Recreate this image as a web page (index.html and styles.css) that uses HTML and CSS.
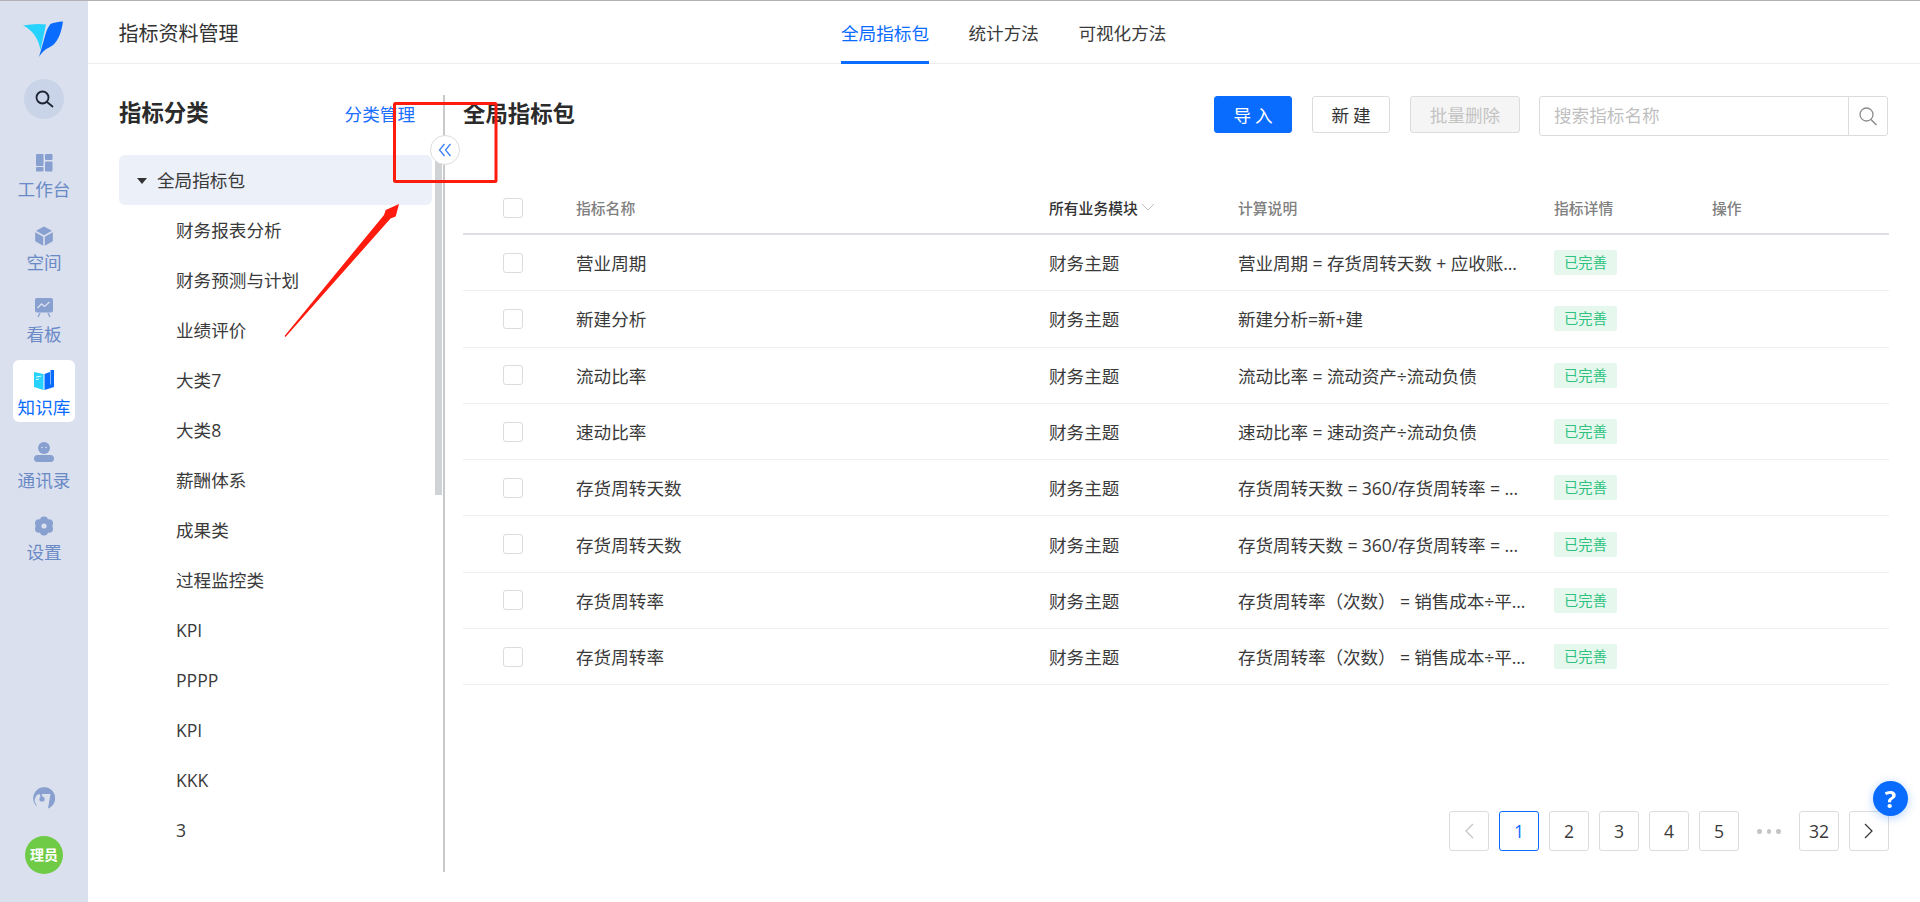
FILE: index.html
```html
<!DOCTYPE html>
<html lang="zh">
<head>
<meta charset="utf-8">
<title>指标资料管理</title>
<link rel="stylesheet" href="styles.css">
</head>
<body>
<div class="page">
  <aside class="rail">
    <svg class="logo" viewBox="0 0 42 38" width="42" height="38">
      <path fill="#26d3ff" d="M1 4.500Q14 2 24 3.500L18.500 29Q15 11 1 4.500Z"/>
      <path fill="#0a6cff" d="M41 0.500Q33 1 28.500 3Q25 7 23 15L17 36Q21 29 28 26Q38 21 41 0.500Z"/>
    </svg>
    <div class="search-dot">
      <svg viewBox="0 0 20 20" width="20" height="20"><circle cx="8.500" cy="8.500" r="6" fill="none" stroke="#1d2433" stroke-width="1.800"/><path d="M13 13l5.500 4.500" stroke="#1d2433" stroke-width="1.800" stroke-linecap="round"/></svg>
    </div>
    <nav class="rail-nav">
      <a class="rail-item">
        <svg class="rail-icon" viewBox="0 0 20 20"><g fill="#87a0cf"><rect x="2" y="1" width="7.500" height="12" rx="1"/><rect x="2" y="14" width="7.500" height="4.500" rx="1"/><rect x="11" y="1" width="7.500" height="6" rx="1"/><rect x="11" y="8.500" width="7.500" height="10" rx="1"/></g></svg>
        <span>工作台</span>
      </a>
      <a class="rail-item">
        <svg class="rail-icon" viewBox="0 0 20 20"><g fill="#87a0cf"><path d="M10 .500l8 4.300-8 4.400-8-4.400z"/><path d="M1.200 6.300l8 4.400v9l-8-4.500z"/><path d="M18.800 6.300l-8 4.400v9l8-4.500z"/></g></svg>
        <span>空间</span>
      </a>
      <a class="rail-item">
        <svg class="rail-icon" viewBox="0 0 20 20"><rect x="1" y="0" width="18" height="14.500" rx="2" fill="#87a0cf"/><path d="M3.500 10l4-4 3 2.500 5-4.500" fill="none" stroke="#dae0ee" stroke-width="1.300"/><path d="M6 15l-2 4M14 15l2 4" stroke="#87a0cf" stroke-width="1.300"/></svg>
        <span>看板</span>
      </a>
      <a class="rail-item is-active">
        <svg class="rail-icon" viewBox="0 0 20 20"><path fill="#26d3ff" d="M0 1l9.500 2v16L0 16z"/><path fill="#0a6cff" d="M10.500 3l6-2.200V-1H20v17l-9.500 3z"/><path d="M2 6l5-.8M2 8.500l3-.5" stroke="#fff" stroke-width=".9"/><path d="M16.500 .5v13" stroke="#8fc0ff" stroke-width=".9"/></svg>
        <span>知识库</span>
      </a>
      <a class="rail-item">
        <svg class="rail-icon" viewBox="0 0 20 20"><circle cx="10" cy="5" r="6" fill="#87a0cf"/><circle cx="8" cy="4.500" r=".8" fill="#dae0ee"/><circle cx="12" cy="4.500" r=".8" fill="#dae0ee"/><rect x="0" y="12" width="20" height="7" rx="3.500" fill="#87a0cf"/></svg>
        <span>通讯录</span>
      </a>
      <a class="rail-item">
        <svg class="rail-icon" viewBox="0 0 20 20"><g fill="#87a0cf"><circle cx="10" cy="4.500" r="4"/><circle cx="10" cy="15.500" r="4"/><circle cx="5" cy="7.300" r="4"/><circle cx="15" cy="7.300" r="4"/><circle cx="5" cy="12.700" r="4"/><circle cx="15" cy="12.700" r="4"/></g><circle cx="10" cy="10" r="2.600" fill="#dae0ee"/></svg>
        <span>设置</span>
      </a>
    </nav>
    <div class="rail-foot">
      <svg class="gauge" viewBox="0 0 22 22" width="22" height="22"><path fill="#87a0cf" d="M4 19.500A11 11 0 1 1 15 21.500L17.500 7H8.500L10 11H8L6.500 7Q2.500 7 1.500 14Z"/><circle cx="9" cy="12" r="2.600" fill="#87a0cf"/></svg>
      <div class="avatar">理员</div>
    </div>
  </aside>

  <div class="main">
    <header class="topbar">
      <div class="topbar-title">指标资料管理</div>
      <div class="tabs">
        <a class="tab is-active">全局指标包</a>
        <a class="tab">统计方法</a>
        <a class="tab">可视化方法</a>
      </div>
    </header>

    <div class="content">
      <section class="side">
        <div class="side-head">
          <h2 class="heading">指标分类</h2>
          <a class="side-link">分类管理</a>
        </div>
        <ul class="tree">
          <li class="tree-root"><i class="caret"></i>全局指标包</li>
          <li>财务报表分析</li>
          <li>财务预测与计划</li>
          <li>业绩评价</li>
          <li>大类7</li>
          <li>大类8</li>
          <li>薪酬体系</li>
          <li>成果类</li>
          <li>过程监控类</li>
          <li>KPI</li>
          <li>PPPP</li>
          <li>KPI</li>
          <li>KKK</li>
          <li>3</li>
        </ul>
        <div class="scroll-thumb"></div>
        <button class="collapse">
          <svg viewBox="0 0 16 16" width="16" height="16"><path d="M7.500 2L2.500 8l5 6M13.500 2l-5 6 5 6" fill="none" stroke="#2f7df6" stroke-width="1.200"/></svg>
        </button>
      </section>

      <section class="panel">
        <div class="toolbar">
          <h2 class="heading">全局指标包</h2>
          <div class="actions">
            <button class="btn btn-primary">导入</button>
            <button class="btn">新建</button>
            <button class="btn btn-disabled">批量删除</button>
            <div class="search">
              <span class="search-ph">搜索指标名称</span>
              <span class="search-btn"><svg viewBox="0 0 20 20" width="20" height="20"><circle cx="8.500" cy="8.500" r="6.500" fill="none" stroke="#8c8c8c" stroke-width="1.300"/><path d="M13 13.500l5.500 5.500" stroke="#8c8c8c" stroke-width="1.500"/></svg></span>
            </div>
          </div>
        </div>

        <div class="table">
          <div class="row row-head">
            <span class="check"></span>
            <span>指标名称</span>
            <span class="th-strong">所有业务模块<svg viewBox="0 0 14 8" width="14" height="8"><path d="M1 1l6 6 6-6" fill="none" stroke="#bfbfbf" stroke-width="1"/></svg></span>
            <span>计算说明</span>
            <span>指标详情</span>
            <span>操作</span>
          </div>
          <div class="row"><span class="check"></span><span>营业周期</span><span>财务主题</span><span class="calc">营业周期 = 存货周转天数 + 应收账...</span><span><em class="tag">已完善</em></span><span></span></div>
          <div class="row"><span class="check"></span><span>新建分析</span><span>财务主题</span><span class="calc">新建分析=新+建</span><span><em class="tag">已完善</em></span><span></span></div>
          <div class="row"><span class="check"></span><span>流动比率</span><span>财务主题</span><span class="calc">流动比率 = 流动资产÷流动负债</span><span><em class="tag">已完善</em></span><span></span></div>
          <div class="row"><span class="check"></span><span>速动比率</span><span>财务主题</span><span class="calc">速动比率 = 速动资产÷流动负债</span><span><em class="tag">已完善</em></span><span></span></div>
          <div class="row"><span class="check"></span><span>存货周转天数</span><span>财务主题</span><span class="calc">存货周转天数 = 360/存货周转率 = ...</span><span><em class="tag">已完善</em></span><span></span></div>
          <div class="row"><span class="check"></span><span>存货周转天数</span><span>财务主题</span><span class="calc">存货周转天数 = 360/存货周转率 = ...</span><span><em class="tag">已完善</em></span><span></span></div>
          <div class="row"><span class="check"></span><span>存货周转率</span><span>财务主题</span><span class="calc">存货周转率（次数） = 销售成本÷平...</span><span><em class="tag">已完善</em></span><span></span></div>
          <div class="row"><span class="check"></span><span>存货周转率</span><span>财务主题</span><span class="calc">存货周转率（次数） = 销售成本÷平...</span><span><em class="tag">已完善</em></span><span></span></div>
        </div>

        <div class="pager">
          <a class="pg pg-off"><svg viewBox="0 0 10 16" width="10" height="16"><path d="M9 1L2 8l7 7" fill="none" stroke="#c4c4c4" stroke-width="1.200"/></svg></a>
          <a class="pg pg-on">1</a>
          <a class="pg">2</a>
          <a class="pg">3</a>
          <a class="pg">4</a>
          <a class="pg">5</a>
          <span class="pg-dots"><i></i><i></i><i></i></span>
          <a class="pg">32</a>
          <a class="pg"><svg viewBox="0 0 10 16" width="10" height="16"><path d="M1 1l7 7-7 7" fill="none" stroke="#333" stroke-width="1.200"/></svg></a>
        </div>
      </section>
    </div>
  </div>
</div>

<button class="help">?</button>

<svg class="annotation" viewBox="0 0 1920 902" width="1920" height="902">
  <rect x="394.500" y="103.500" width="101.500" height="78" rx="1" fill="none" stroke="#ff1c0f" stroke-width="3"/>
  <path fill="#ff1c0f" d="M284.500 336L384 215L385.700 210L399 204L395.700 216.500L390.500 218.500L285.500 337Z"/>
</svg>
</body>
</html>
```

FILE: styles.css
```css
* { box-sizing: border-box; }
html, body { margin: 0; height: 100%; overflow: hidden; }
body {
  font-family: "Open Sans", "Noto Sans CJK SC", sans-serif;
  font-size: 17.6px;
  color: #3a3a3a;
  background: #fff;
  border-top: 1px solid #b0b0b0;
}
.page { display: flex; height: 901px; }

/* rail */
.rail {
  width: 88px;
  flex: none;
  background: #dae0ee;
  display: flex;
  flex-direction: column;
  align-items: center;
  padding-top: 20px;
}
.logo { display: block; margin-right: 2px; }
.search-dot {
  width: 40px;
  height: 40px;
  margin-top: 20px;
  border-radius: 50%;
  background: #c9d4e8;
  display: flex;
  align-items: center;
  justify-content: center;
}
.rail-nav {
  margin-top: 23px;
  display: flex;
  flex-direction: column;
  gap: 10.600px;
  align-items: center;
}
.rail-item {
  width: 62px;
  height: 62px;
  border-radius: 6px;
  display: flex;
  flex-direction: column;
  align-items: center;
  padding-top: 11px;
  color: #6a8ac6;
  font-size: 17.6px;
  line-height: 24px;
}
.rail-item span { margin-top: 4.300px; white-space: nowrap; }
.rail-icon { width: 20px; height: 20px; flex: none; overflow: visible; }
.rail-item.is-active { background: #fff; color: #0a6cff; }
.rail-foot {
  margin-top: auto;
  margin-bottom: 28px;
  display: flex;
  flex-direction: column;
  align-items: center;
}
.gauge { display: block; }
.avatar {
  width: 38px;
  height: 38px;
  margin-top: 27px;
  border-radius: 50%;
  background: #6fcb45;
  color: #fff;
  font-size: 14px;
  font-weight: 700;
  line-height: 38px;
  text-align: center;
  white-space: nowrap;
}

/* top bar */
.main { flex: 1; min-width: 0; display: flex; flex-direction: column; }
.topbar {
  height: 63px;
  flex: none;
  display: flex;
  padding-left: 31px;
  border-bottom: 1px solid #eeeeee;
}
.topbar-title { width: 722px; font-size: 20px; height: 62px; color: #333; line-height: 62px; padding-top: 2px; margin-left: -0.500px; }
.tabs { display: flex; gap: 39.500px; margin-left: 0.500px; }
.tab { height: 63px; line-height: 64px; color: #3a3a3a; }
.tab.is-active { color: #0a6cff; border-bottom: 3px solid #0a6cff; }

/* content */
.content { flex: 1; display: flex; min-height: 0; }
.side {
  position: relative;
  width: 357px;
  height: 777px;
  margin-top: 31px;
  padding-left: 31px;
  border-right: 2px solid #c9c9c9;
  flex: none;
}
.side-head {
  display: flex;
  justify-content: space-between;
  align-items: center;
  height: 36px;
  margin-bottom: 24px;
  padding-right: 28px;
}
.heading { margin: 0; font-size: 22.400px; line-height: 36px; font-weight: 700; color: #2b2b2b; }
.side-link { color: #1a6fff; }
.tree { list-style: none; margin: 0; padding: 0; width: 313px; }
.tree li { height: 50px; line-height: 50px; padding-left: 57px; white-space: nowrap; }
.tree .tree-root {
  padding-left: 38px;
  background: #ecf0f8;
  border-radius: 6px;
  position: relative;
}
.caret {
  position: absolute;
  left: 18px;
  top: 22.500px;
  border-left: 5.500px solid transparent;
  border-right: 5.500px solid transparent;
  border-top: 6px solid #333;
}
.scroll-thumb {
  position: absolute;
  left: 347px;
  top: 60px;
  width: 6.500px;
  height: 340px;
  background: #d0d3d6;
}
.collapse {
  position: absolute;
  left: 342px;
  top: 40px;
  width: 30px;
  height: 30px;
  padding: 0;
  border-radius: 50%;
  border: 1px solid #dcdcdc;
  background: #fff;
  display: flex;
  align-items: center;
  justify-content: center;
}

/* panel */
.panel { flex: 1; min-width: 0; margin-left: 18px; margin-right: 31px; padding-top: 32px; }
.toolbar { display: flex; justify-content: space-between; height: 38px; }
.actions { display: flex; gap: 20px; align-items: flex-start; padding-right: 1px; }
.btn {
  width: 78px;
  height: 37px;
  padding: 0;
  border: 1px solid #dcdcdc;
  border-radius: 3px;
  background: #fff;
  color: #333;
  font: inherit;
  line-height: 34px;
  letter-spacing: 4px;
  text-indent: 4px;
}
.btn-primary { background: #0a6cff; border-color: #0a6cff; color: #fff; }
.btn-disabled { width: 110px; background: #f5f5f5; color: #c4c4c4; letter-spacing: 0; text-indent: 0; }
.search {
  width: 349px;
  height: 40px;
  display: flex;
  border: 1px solid #dcdcdc;
  border-radius: 3px;
  margin-left: -1px;
}
.search-ph { flex: 1; padding-left: 14px; line-height: 36px; color: #bfbfbf; }
.search-btn {
  width: 39px;
  border-left: 1px solid #dcdcdc;
  display: flex;
  align-items: center;
  justify-content: center;
}

/* table */
.table { margin-top: 47px; }
.row {
  display: grid;
  grid-template-columns: 113px 473px 189px 316px 158px 1fr;
  align-items: center;
  height: 56.300px;
  border-bottom: 1px solid #eeeeee;
}
.row > span { white-space: nowrap; overflow: hidden; }
.row-head {
  height: 54px;
  border-bottom: 2px solid #dddde5;
  font-size: 14.800px;
  color: #808080;
  font-weight: 500;
}
.row > .check {
  width: 20px;
  height: 20px;
  margin-left: 40px;
  border: 1px solid #dcdcdc;
  border-radius: 3px;
  background: #fff;
}
.row-head > .check { margin-top: 2px; }
.th-strong { color: #333; display: flex; align-items: center; gap: 3px; }
.calc { letter-spacing: -0.1px; }
.tag {
  display: block;
  width: 63px;
  height: 25px;
  border-radius: 2px;
  background: #e6f8ee;
  color: #2ec27e;
  font-style: normal;
  font-size: 14.300px;
  line-height: 25px;
  text-align: center;
}

/* pager */
.pager { display: flex; gap: 10px; justify-content: flex-end; margin-top: 126px; }
.pg {
  width: 40px;
  height: 40px;
  border: 1px solid #dcdcdc;
  border-radius: 3px;
  display: flex;
  align-items: center;
  justify-content: center;
  color: #3a3a3a;
  line-height: 1;
}
.pg-on { border-color: #0a6cff; color: #0a6cff; }
.pg-dots { width: 40px; height: 40px; display: flex; align-items: center; justify-content: center; gap: 5px; }
.pg-dots i { width: 4.500px; height: 4.500px; border-radius: 50%; background: #c4c4c4; }

/* overlays */
.help {
  position: fixed;
  left: 1873px;
  top: 780.500px;
  width: 35px;
  height: 35px;
  padding: 0;
  border: 0;
  border-radius: 50%;
  background: #0a6cff;
  color: #fff;
  font: 700 24px/35px "Open Sans", sans-serif;
  text-align: center;
  box-shadow: 0 2px 10px rgba(10, 108, 255, .3);
}
.annotation { position: fixed; left: 0; top: 0; pointer-events: none; }
```
